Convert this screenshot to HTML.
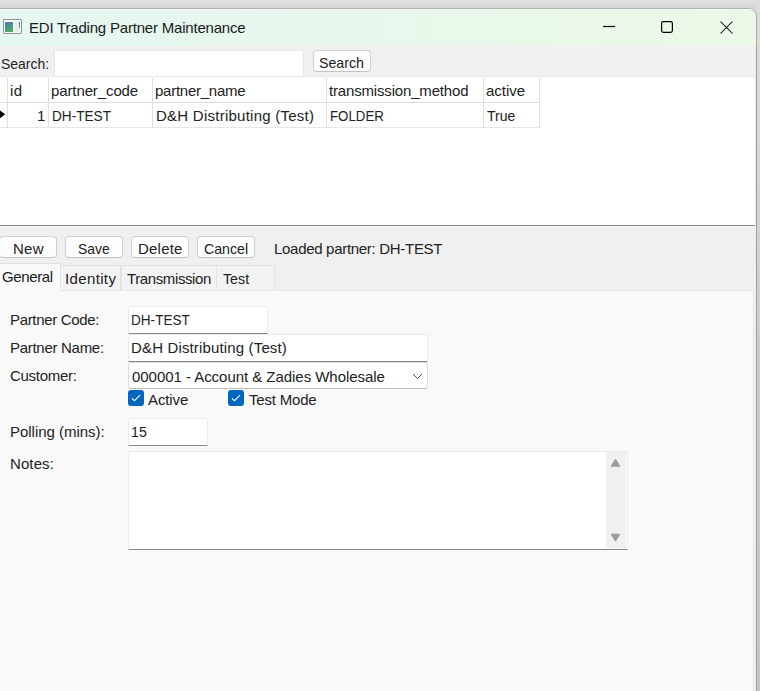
<!DOCTYPE html>
<html><head><meta charset="utf-8">
<style>
html,body{margin:0;padding:0;}
body{width:760px;height:691px;overflow:hidden;position:relative;background:#f9f9f9;font-family:"Liberation Sans",sans-serif;font-size:15px;color:#222;}
.a{position:absolute;}
.t{position:absolute;white-space:pre;line-height:16px;height:16px;}
.btn{position:absolute;box-sizing:border-box;border:1px solid #d0d0d0;border-bottom-color:#c4c4c4;border-radius:4px;background:#fdfdfd;}
.tb{position:absolute;box-sizing:border-box;background:#fff;border:1px solid #ebebeb;border-bottom:1px solid #878787;border-radius:3px 3px 0 0;}
.vl{position:absolute;width:1px;}
.hl{position:absolute;height:1px;}
.tab{position:absolute;box-sizing:border-box;border:1px solid #e3e3e3;border-bottom:none;background:#f3f3f3;}
.cb{position:absolute;width:16px;height:16px;border-radius:3px;background:#0067c0;}
</style></head><body>
<!-- outside -->
<div class="a" style="left:0;top:0;width:760px;height:20px;background:linear-gradient(#e1e1e1,#d6d6d6 8px,#dcdcdc);"></div>
<div class="a" style="left:757px;top:0;width:3px;height:691px;background:linear-gradient(#dedede,#cbcbcb 400px,#c6c6c6);"></div>

<!-- window frame -->
<div class="a" style="left:-2px;top:8px;width:759px;height:700px;box-sizing:border-box;border:1px solid #a6a6a6;border-top-color:#b0b0b0;border-radius:0 9px 0 0;background:#f0f0f0;overflow:hidden;">
<div class="a" style="left:0;top:0;width:760px;height:37px;background:linear-gradient(90deg,#e5f7f1,#ecf8e7);"></div>
<div class="a" style="left:0;top:0;width:760px;height:1px;background:#f0fcf4;"></div>
<div class="a" style="left:756px;top:0;width:1px;height:37px;background:#f0fcec;"></div>
</div>

<!-- app icon -->
<div class="a" style="left:3px;top:19px;width:19px;height:15px;box-sizing:border-box;border:1px solid #8d9298;border-radius:1px;background:#f7f7f7;"></div>
<div class="a" style="left:5px;top:22px;width:8px;height:10px;background:linear-gradient(160deg,#4f7cb6,#4a9a7a 55%,#52ad5c);"></div>
<div class="a" style="left:14px;top:22px;width:6px;height:10px;background:#ebebeb;"></div>
<div class="a" style="left:19px;top:22px;width:1px;height:6px;background:linear-gradient(#4a78c0,#5ab468);"></div>
<div class="t" style="left:29px;top:20px;letter-spacing:-0.2px;color:#1a1a1a;">EDI Trading Partner Maintenance</div>
<!-- caption buttons -->
<svg class="a" style="left:600px;top:20px" width="18" height="14" viewBox="0 0 18 14"><path d="M3 6.5H15" stroke="#000" stroke-width="1.2"/></svg>
<svg class="a" style="left:659px;top:19px" width="16" height="16" viewBox="0 0 16 16"><rect x="2.6" y="2.6" width="10.8" height="10.8" rx="1.8" fill="none" stroke="#000" stroke-width="1.2"/></svg>
<svg class="a" style="left:719px;top:20px" width="15" height="15" viewBox="0 0 15 15"><path d="M1.5 1.5L13.5 13.5M13.5 1.5L1.5 13.5" stroke="#000" stroke-width="1.05"/></svg>

<!-- search row -->
<div class="t" style="left:1px;top:56px;transform:scaleX(0.93);transform-origin:0 0;">Search:</div>
<div class="a" style="left:0;top:76px;width:755px;height:1px;background:#ebebeb;"></div>
<div class="a" style="left:54px;top:50px;width:250px;height:27px;box-sizing:border-box;border:1px solid #e6e6e6;border-radius:2px;background:#fff;"></div>
<div class="btn" style="left:313px;top:50px;width:58px;height:22px;"></div>
<div class="t" style="left:319px;top:55px;transform:scaleX(0.945);transform-origin:0 0;">Search</div>

<!-- grid -->
<div class="a" style="left:0;top:77px;width:755px;height:148px;background:#fff;"></div>
<div class="hl" style="left:0;top:102px;width:540px;background:#dcdcdc;"></div>
<div class="hl" style="left:0;top:127px;width:540px;background:#e6e6e6;"></div>
<div class="vl" style="left:7px;top:78px;height:50px;background:#e0e0e0;"></div>
<div class="vl" style="left:48px;top:78px;height:50px;background:#e0e0e0;"></div>
<div class="vl" style="left:152px;top:78px;height:50px;background:#e0e0e0;"></div>
<div class="vl" style="left:326px;top:78px;height:50px;background:#e0e0e0;"></div>
<div class="vl" style="left:483px;top:78px;height:50px;background:#e0e0e0;"></div>
<div class="vl" style="left:539px;top:78px;height:50px;background:#e0e0e0;"></div>
<svg class="a" style="left:0;top:109px" width="7" height="12" viewBox="0 0 7 12"><path d="M-1 0.8L5.1 5.3L-1 10.1Z" fill="#000"/></svg>
<div class="t" style="left:10px;top:83px;letter-spacing:0.5px;">id</div>
<div class="t" style="left:51px;top:83px;letter-spacing:-0.11px;">partner_code</div>
<div class="t" style="left:155px;top:83px;letter-spacing:-0.25px;">partner_name</div>
<div class="t" style="left:329px;top:83px;letter-spacing:-0.17px;">transmission_method</div>
<div class="t" style="left:486px;top:83px;letter-spacing:-0.02px;">active</div>
<div class="t" style="left:37px;top:108px;">1</div>
<div class="t" style="left:52px;top:108px;transform:scaleX(0.908);transform-origin:0 0;">DH-TEST</div>
<div class="t" style="left:156px;top:108px;letter-spacing:0.25px;">D&amp;H Distributing (Test)</div>
<div class="t" style="left:330px;top:108px;transform:scaleX(0.885);transform-origin:0 0;">FOLDER</div>
<div class="t" style="left:487px;top:108px;transform:scaleX(0.937);transform-origin:0 0;">True</div>

<!-- splitter -->
<div class="hl" style="left:0;top:225px;width:755px;background:#858585;"></div>
<div class="hl" style="left:0;top:226px;width:755px;background:#f6f6f6;"></div>

<!-- buttons -->
<div class="btn" style="left:-1px;top:236px;width:58px;height:22px;"></div>
<div class="t" style="left:13px;top:241px;letter-spacing:0.25px;">New</div>
<div class="btn" style="left:65px;top:236px;width:58px;height:22px;"></div>
<div class="t" style="left:78px;top:241px;transform:scaleX(0.924);transform-origin:0 0;">Save</div>
<div class="btn" style="left:131px;top:236px;width:58px;height:22px;"></div>
<div class="t" style="left:138px;top:241px;letter-spacing:0.22px;">Delete</div>
<div class="btn" style="left:197px;top:236px;width:58px;height:22px;"></div>
<div class="t" style="left:204px;top:241px;transform:scaleX(0.944);transform-origin:0 0;">Cancel</div>
<div class="t" style="left:274px;top:241px;letter-spacing:-0.3px;">Loaded partner: DH-TEST</div>

<!-- tab page -->
<div class="a" style="left:0;top:290px;width:754px;height:401px;box-sizing:border-box;border-top:1px solid #e6e6e6;border-right:1px solid #e6e6e6;background:#f9f9f9;"></div>
<div class="a" style="left:756px;top:46px;width:1px;height:645px;background:#9c9c9c;"></div>
<!-- tabs -->
<div class="tab" style="left:-1px;top:263px;width:62px;height:28px;background:#f9f9f9;"></div>
<div class="tab" style="left:60px;top:265px;width:61px;height:25px;"></div>
<div class="tab" style="left:121px;top:265px;width:96px;height:25px;"></div>
<div class="tab" style="left:216px;top:265px;width:59px;height:25px;"></div>
<div class="t" style="left:2px;top:269px;letter-spacing:-0.37px;">General</div>
<div class="t" style="left:65px;top:271px;letter-spacing:0.36px;">Identity</div>
<div class="t" style="left:127px;top:271px;letter-spacing:-0.39px;">Transmission</div>
<div class="t" style="left:223px;top:271px;transform:scaleX(0.948);transform-origin:0 0;">Test</div>

<!-- form -->
<div class="t" style="left:10px;top:312px;letter-spacing:-0.34px;">Partner Code:</div>
<div class="tb" style="left:128px;top:306px;width:140px;height:28px;"></div>
<div class="t" style="left:131px;top:312px;transform:scaleX(0.905);transform-origin:0 0;">DH-TEST</div>

<div class="t" style="left:10px;top:340px;letter-spacing:-0.29px;">Partner Name:</div>
<div class="tb" style="left:128px;top:334px;width:300px;height:28px;"></div>
<div class="t" style="left:131px;top:340px;letter-spacing:0.15px;">D&amp;H Distributing (Test)</div>

<div class="t" style="left:10px;top:368px;letter-spacing:-0.28px;">Customer:</div>
<div class="a" style="left:128px;top:362px;width:300px;height:27px;box-sizing:border-box;background:#fff;border:1px solid #dcdcdc;border-bottom-color:#bdbdbd;border-radius:3px;"></div>
<div class="t" style="left:132px;top:369px;letter-spacing:-0.04px;">000001 - Account &amp; Zadies Wholesale</div>
<svg class="a" style="left:412px;top:372px" width="12" height="8" viewBox="0 0 12 8"><path d="M1 2L5.5 6.5L10 2" fill="none" stroke="#555" stroke-width="1"/></svg>

<div class="cb" style="left:128px;top:390px;"></div>
<svg class="a" style="left:128px;top:390px" width="16" height="16" viewBox="0 0 16 16"><path d="M3.9 8.4L6.5 10.7L12.1 5.2" fill="none" stroke="#fff" stroke-width="1.05"/></svg>
<div class="t" style="left:148px;top:392px;letter-spacing:-0.1px;">Active</div>
<div class="cb" style="left:228px;top:390px;"></div>
<svg class="a" style="left:228px;top:390px" width="16" height="16" viewBox="0 0 16 16"><path d="M3.9 8.4L6.5 10.7L12.1 5.2" fill="none" stroke="#fff" stroke-width="1.05"/></svg>
<div class="t" style="left:249px;top:392px;letter-spacing:-0.19px;">Test Mode</div>

<div class="t" style="left:10px;top:424px;letter-spacing:-0.02px;">Polling (mins):</div>
<div class="tb" style="left:128px;top:418px;width:80px;height:28px;"></div>
<div class="t" style="left:131px;top:424px;transform:scaleX(0.947);transform-origin:0 0;">15</div>

<div class="t" style="left:10px;top:456px;letter-spacing:0.1px;">Notes:</div>
<div class="tb" style="left:128px;top:451px;width:500px;height:99px;"></div>
<div class="a" style="left:606px;top:452px;width:20px;height:96px;background:#f0f0f0;"></div>
<svg class="a" style="left:610px;top:458px" width="12" height="10" viewBox="0 0 12 10"><path d="M5.5 1.2L9.8 8.2L1.2 8.2Z" fill="#9c9c9c" stroke="#9c9c9c" stroke-width="1" stroke-linejoin="round"/></svg>
<svg class="a" style="left:610px;top:533px" width="12" height="10" viewBox="0 0 12 10"><path d="M5.5 8.2L9.8 1.2L1.2 1.2Z" fill="#9c9c9c" stroke="#9c9c9c" stroke-width="1" stroke-linejoin="round"/></svg>
</body></html>
